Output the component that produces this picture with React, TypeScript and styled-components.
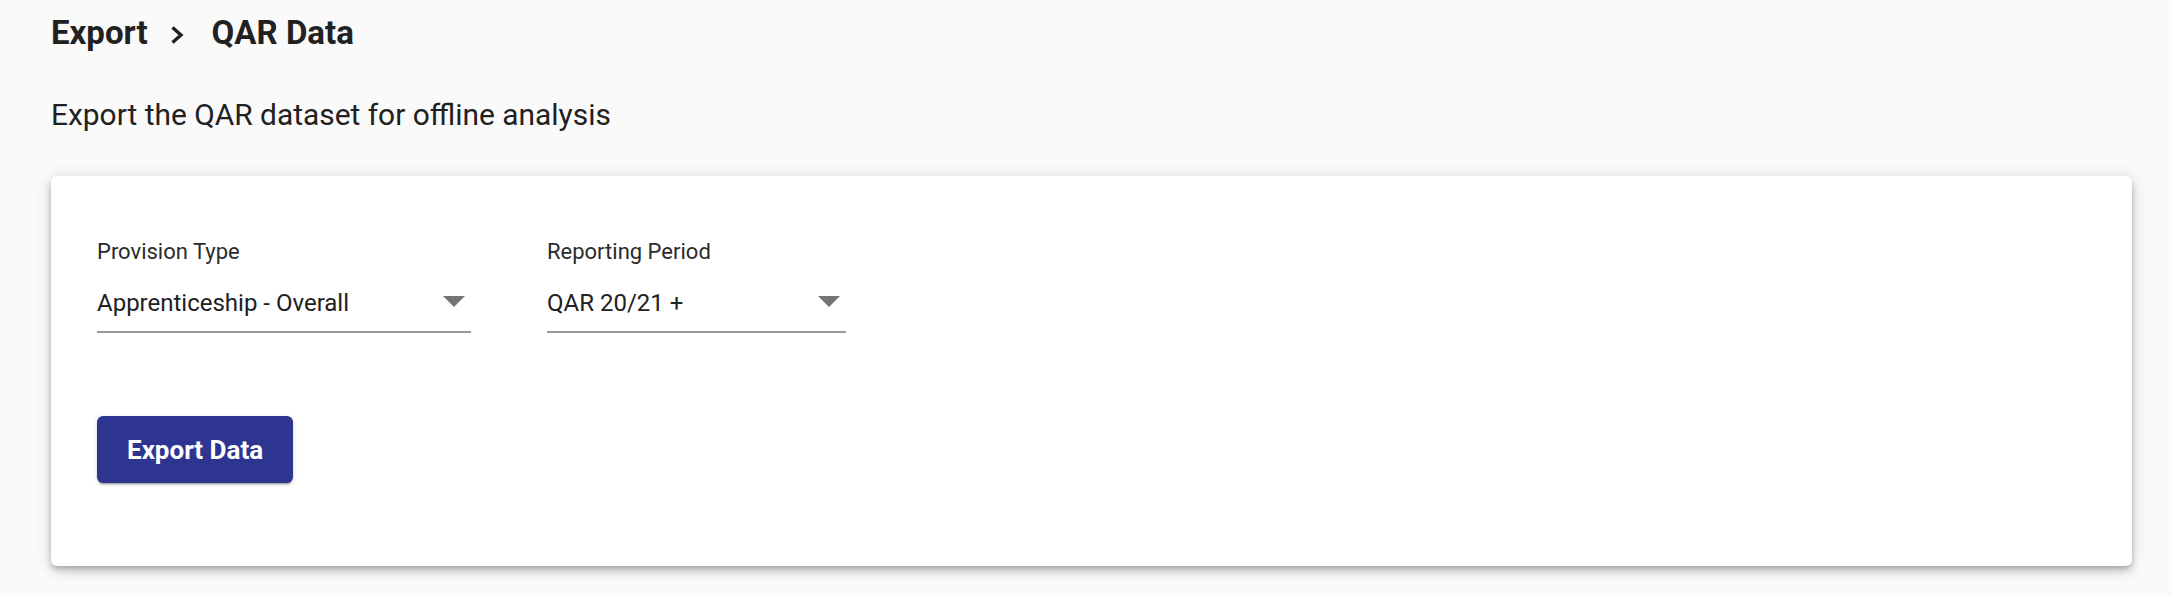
import React from "react";
import styled, { createGlobalStyle } from "styled-components";

const GlobalStyle = createGlobalStyle`
  html, body {
    margin: 0;
    padding: 0;
    background: #fafafa;
    font-family: Roboto, "Liberation Sans", Arial, sans-serif;
    color: #212121;
  }
  * { box-sizing: border-box; }
`;

const Page = styled.main`
  display: flex;
  flex-direction: column;
  padding: 13px 40px 31px 51px;
  min-height: 595px;
  background: #fafafa;
`;

const Breadcrumb = styled.nav`
  display: flex;
  align-items: center;
  height: 40px;
  font-size: 33px;
  line-height: 40px;
  font-weight: 700;
  color: #212121;
`;

const Crumb = styled.span`
  white-space: nowrap;
`;

const Separator = styled.svg`
  width: 16px;
  height: 20px;
  margin: 3px 27px 0 21px;
  fill: none;
  stroke: #212121;
  stroke-width: 3.4;
  flex: none;
`;

const Subtitle = styled.p`
  margin: 39px 0 0 0;
  font-size: 29.9px;
  line-height: 45px;
  font-weight: 400;
  color: #212121;
`;

const Card = styled.section`
  margin-top: 39px;
  background: #ffffff;
  border-radius: 6px;
  box-shadow: 0 3px 5px -1px rgba(0, 0, 0, 0.2), 0 6px 10px 0 rgba(0, 0, 0, 0.14),
    0 1px 18px 0 rgba(0, 0, 0, 0.12);
  padding: 63px 46px 83px 46px;
  display: flex;
  flex-direction: column;
`;

const Fields = styled.div`
  display: flex;
  gap: 76px;
`;

const Field = styled.div<{ $width: number }>`
  display: flex;
  flex-direction: column;
  width: ${(p) => p.$width}px;
`;

const Label = styled.label`
  font-size: 22px;
  line-height: 26px;
  color: #2b2b2b;
  white-space: nowrap;
`;

const SelectBox = styled.div`
  margin-top: 24px;
  display: flex;
  align-items: flex-start;
  justify-content: space-between;
  padding-bottom: 14px;
  border-bottom: 2px solid #9a9a9a;
  cursor: pointer;
`;

const Value = styled.span`
  font-size: 24px;
  line-height: 28px;
  color: #212121;
  white-space: nowrap;
`;

const Caret = styled.svg`
  width: 22px;
  height: 11px;
  margin-top: 7px;
  margin-right: 6px;
  fill: #757575;
  flex: none;
`;

const Actions = styled.div`
  margin-top: 83px;
  display: flex;
`;

const Button = styled.button`
  height: 67px;
  padding: 0 30px;
  border: none;
  border-radius: 6px;
  background: #2d3591;
  color: #ffffff;
  font-family: Roboto, "Liberation Sans", Arial, sans-serif;
  font-size: 26px;
  font-weight: 700;
  display: flex;
  align-items: center;
  justify-content: center;
  box-shadow: 0 3px 1px -2px rgba(0, 0, 0, 0.2), 0 2px 2px 0 rgba(0, 0, 0, 0.14),
    0 1px 5px 0 rgba(0, 0, 0, 0.12);
  cursor: pointer;
`;

type SelectProps = { label: string; value: string; width: number };

const SelectField: React.FC<SelectProps> = ({ label, value, width }) => (
  <Field $width={width}>
    <Label>{label}</Label>
    <SelectBox>
      <Value>{value}</Value>
      <Caret viewBox="0 0 22 11">
        <path d="M0 0 L22 0 L11 11 Z" />
      </Caret>
    </SelectBox>
  </Field>
);

export default function App() {
  return (
    <>
      <GlobalStyle />
      <Page>
        <Breadcrumb>
          <Crumb>Export</Crumb>
          <Separator viewBox="0 0 16 20">
            <path d="M3.5 2.5 L12 10 L3.5 17.5" />
          </Separator>
          <Crumb>QAR Data</Crumb>
        </Breadcrumb>
        <Subtitle>Export the QAR dataset for offline analysis</Subtitle>
        <Card>
          <Fields>
            <SelectField label="Provision Type" value="Apprenticeship - Overall" width={374} />
            <SelectField label="Reporting Period" value="QAR 20/21 +" width={299} />
          </Fields>
          <Actions>
            <Button>Export Data</Button>
          </Actions>
        </Card>
      </Page>
    </>
  );
}
